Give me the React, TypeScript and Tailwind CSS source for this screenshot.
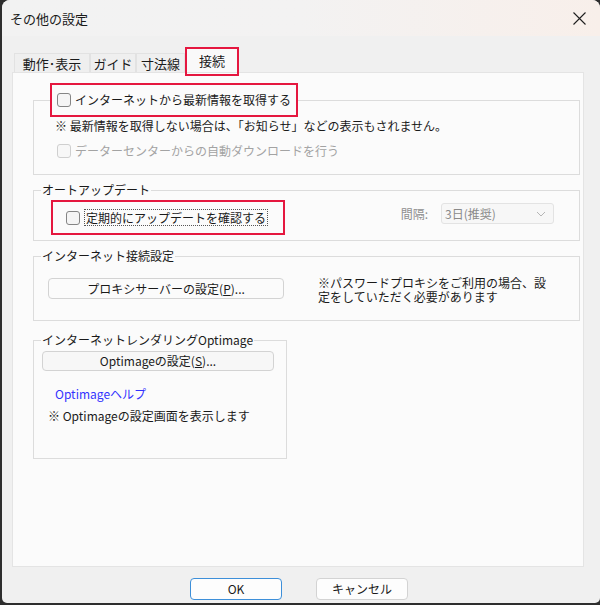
import React from 'react';

// Windows style settings dialog, "接続" tab
const FONT = { fontFamily: '"Noto Sans CJK JP", "Noto Sans", sans-serif' };

const Checkbox: React.FC<{ disabled?: boolean }> = ({ disabled }) => (
  <span
    className={`inline-block h-[14px] w-[14px] flex-shrink-0 rounded-[3px] border ${
      disabled ? 'border-[#cfcfcf] bg-[#f7f7f7]' : 'border-[#858585] bg-[#f5f5f5]'
    }`}
  />
);

const GroupBox: React.FC<{ legend: React.ReactNode; className?: string; children: React.ReactNode }> = ({
  legend,
  className = '',
  children,
}) => (
  <fieldset className={`border border-[#dcdcdc] ${className}`}>
    {legend}
    {children}
  </fieldset>
);

const Label: React.FC<{ children: React.ReactNode }> = ({ children }) => (
  <legend className="ml-[7px] px-[1px] text-[12px] leading-[14px] text-[#1a1a1a]">{children}</legend>
);

const Tab: React.FC<{ label: string; width: string }> = ({ label, width }) => (
  <div
    className={`flex h-[19px] items-center justify-center border-l border-r border-t border-[#e2e2e2] bg-[#efefef] text-[13px] leading-[15px] text-[#1a1a1a] ${width}`}
  >
    {label}
  </div>
);

export default function App() {
  return (
    <div className="h-[605px] w-[600px] overflow-hidden bg-[#2e2e2e]" style={FONT}>
      <div className="ml-[2px] flex h-[603px] w-[598px] flex-col rounded-t-[8px] rounded-b-[5px] bg-[#f0f0f0]">
        {/* title bar */}
        <div className="flex h-[36px] items-center justify-between rounded-t-[8px] bg-gradient-to-r from-[#f2f2f2] via-[#f3f2f2] to-[#f8efea] pl-[8px] pr-[14px]">
          <span className="text-[13px] leading-[15px] text-[#1a1a1a]">その他の設定</span>
          <svg width="13" height="13" viewBox="0 0 13 13" className="text-[#1f1f1f]">
            <path d="M0.5 0.5 L12.5 12.5 M12.5 0.5 L0.5 12.5" stroke="currentColor" strokeWidth="1.1" fill="none" />
          </svg>
        </div>

        {/* tabs */}
        <div className="flex h-[36px] items-end pl-[12px]">
          <Tab label="動作･表示" width="w-[76px]" />
          <Tab label="ガイド" width="w-[46px]" />
          <Tab label="寸法線" width="w-[49px]" />
          <div className="relative z-10 flex h-[23px] w-[54px] items-center justify-center bg-[#f9f9f9] text-[13px] leading-[15px] text-[#1a1a1a]">
            接続
            <span className="absolute -bottom-[4px] -top-[2px] left-0 right-0 border-2 border-[#e5173f]" />
          </div>
        </div>

        {/* panel */}
        <div className="ml-[10px] flex h-[495px] w-[572px] flex-col border border-[#e4e4e4] bg-[#fbfbfb] pl-[20px] pr-[3px] pt-[10px]">
          <GroupBox
            legend={
              <legend className="ml-[16px]">
                <div className="flex h-[34px] w-[248px] items-center gap-[4px] border-2 border-[#e5173f] pl-[5px] text-[12px] leading-[16px] text-[#1a1a1a]">
                  <Checkbox />
                  <span>インターネットから最新情報を取得する</span>
                </div>
              </legend>
            }
            className="pb-[14px]"
          >
            <div className="mt-[1px] pl-[21px] text-[12px] leading-[16px] text-[#1a1a1a]">
              ※ 最新情報を取得しない場合は、「お知らせ」などの表示もされません。
            </div>
            <div className="mt-[8px] flex h-[18px] items-center gap-[4px] pl-[23px] text-[12px] leading-[16px] text-[#a3a3a3]">
              <Checkbox disabled />
              <span>データーセンターからの自動ダウンロードを行う</span>
            </div>
          </GroupBox>

          <GroupBox legend={<Label>オートアップデート</Label>} className="mt-[8px] pb-[5px]">
            <div className="mt-[3px] flex items-start justify-between pr-[25px]">
              <div className="ml-[17px] flex h-[35px] w-[234px] items-center gap-[4px] border-2 border-[#e5173f] pl-[13px] text-[12px] leading-[16px] text-[#1a1a1a]">
                <Checkbox />
                <span className="border border-dotted border-[#555555] px-[1px] leading-[15px]">
                  定期的にアップデートを確認する
                </span>
              </div>
              <div className="mt-[3px] flex items-center gap-[13px]">
                <span className="text-[12px] leading-[16px] text-[#8f8f8f]">間隔:</span>
                <div className="flex h-[21px] w-[113px] items-center justify-between rounded-[3px] border border-[#e3e3e3] bg-[#f7f7f7] pl-[3px] pr-[7px] text-[12px] leading-[16px] text-[#8a8a8a]">
                  <span>3日(推奨)</span>
                  <svg width="10" height="6" viewBox="0 0 10 6">
                    <path d="M1 1 L5 5 L9 1" stroke="#b5b5b5" strokeWidth="1" fill="none" />
                  </svg>
                </div>
              </div>
            </div>
          </GroupBox>

          <GroupBox legend={<Label>インターネット接続設定</Label>} className="mt-[8px] pb-[16px]">
            <div className="mt-[15px] flex items-start pl-[14px]">
              <button className="h-[21px] w-[236px] rounded-[4px] border border-[#d3d3d3] bg-[#fbfbfb] text-[12px] leading-[16px] text-[#1a1a1a]">
                プロキシサーバーの設定(<span className="underline">P</span>)...
              </button>
              <div className="-mt-[2px] ml-[34px] text-[12px] leading-[14px] text-[#1a1a1a]">
                ※パスワードプロキシをご利用の場合、設
                <br />
                定をしていただく必要があります
              </div>
            </div>
          </GroupBox>

          <GroupBox legend={<Label>インターネットレンダリングOptimage</Label>} className="mt-[12px] w-[254px] pb-[34px]">
            <button className="ml-[8px] mt-[3px] h-[20px] w-[232px] rounded-[4px] border border-[#d3d3d3] bg-[#f7f7f7] text-[12px] leading-[16px] text-[#1a1a1a]">
              Optimageの設定(<span className="underline">S</span>)...
            </button>
            <div className="mt-[15px] pl-[21px] text-[12px] leading-[16px] text-[#3333ff]">Optimageヘルプ</div>
            <div className="mt-[6px] pl-[14px] text-[12px] leading-[16px] text-[#1a1a1a]">※ Optimageの設定画面を表示します</div>
          </GroupBox>
        </div>

        {/* footer buttons */}
        <div className="mt-[11px] flex gap-[34px] pl-[188px]">
          <button className="h-[22px] w-[92px] rounded-[4px] border border-[#3d8fd9] bg-[#fdfdfd] text-[12px] leading-[16px] text-[#1a1a1a]">
            OK
          </button>
          <button className="h-[22px] w-[92px] rounded-[4px] border border-[#d3d3d3] bg-[#fdfdfd] text-[12px] leading-[16px] text-[#1a1a1a]">
            キャンセル
          </button>
        </div>
      </div>
    </div>
  );
}
